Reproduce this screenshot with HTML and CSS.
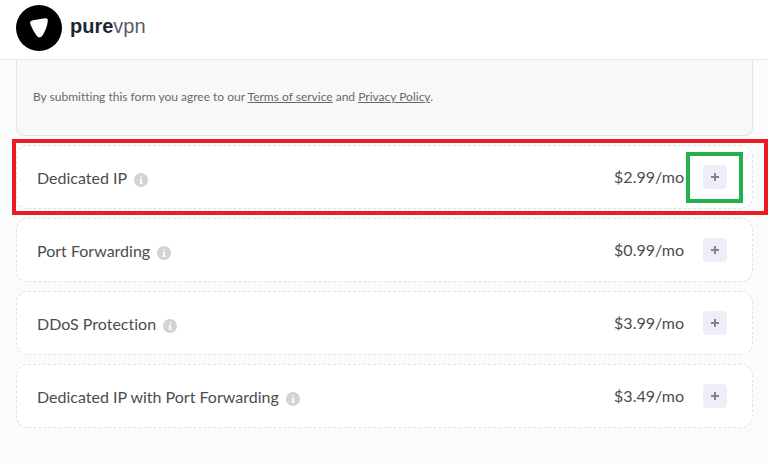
FILE: index.html
```
<!DOCTYPE html>
<html lang="en">
	<head>
		<meta charset="UTF-8">
		<meta name="viewport" content="width=device-width, initial-scale=1">
		<title>PureVPN</title>
		<link rel="stylesheet" href="styles.css">
	</head>
	<body>
		<svg class="sprite" width="0" height="0" aria-hidden="true">
			<symbol id="icon-info" viewBox="0 0 14 14">
				<circle cx="7" cy="7" r="7" fill="#d3d3d3"/>
				<path d="M6.600 3h1.700v1.600H6.600zM5.800 5.700h2.200v4h.6V11H5.600V9.700h.7V7h-.5z" fill="#fff"/>
			</symbol>
			<symbol id="icon-plus" viewBox="0 0 10 10">
				<path d="M5 1v8M1 5h8" stroke="#85828a" stroke-width="2" fill="none"/>
			</symbol>
		</svg>
		<header class="topbar">
			<a class="logo" href="#">
				<svg class="logo-mark" viewBox="0 0 46 46" aria-hidden="true">
					<circle cx="23" cy="23" r="23" fill="#000"/>
					<path d="M17 15.200L29 13.200Q32 12.800 31.800 15.800Q31.300 23 26.500 30.500Q23.500 34.500 20.500 30.500Q16.500 25 14.300 19Q13.300 15.900 17 15.200z" fill="#fff"/>
				</svg>
				<span class="logo-text"><b>pure</b>vpn</span>
			</a>
		</header>
		<main class="content">
			<section class="terms">
				<p>By submitting this form you agree to our <a href="#">Terms of service</a> and <a href="#">Privacy Policy</a>.</p>
			</section>
			<ul class="addons">
				<li class="addon addon-marked">
					<span class="addon-name">Dedicated IP</span>
					<svg class="info"><use href="#icon-info"/></svg>
					<span class="price">$2.99/mo</span>
					<button class="add" type="button" aria-label="Add Dedicated IP"><svg><use href="#icon-plus"/></svg></button>
				</li>
				<li class="addon">
					<span class="addon-name">Port Forwarding</span>
					<svg class="info"><use href="#icon-info"/></svg>
					<span class="price">$0.99/mo</span>
					<button class="add" type="button" aria-label="Add Port Forwarding"><svg><use href="#icon-plus"/></svg></button>
				</li>
				<li class="addon">
					<span class="addon-name">DDoS Protection</span>
					<svg class="info"><use href="#icon-info"/></svg>
					<span class="price">$3.99/mo</span>
					<button class="add" type="button" aria-label="Add DDoS Protection"><svg><use href="#icon-plus"/></svg></button>
				</li>
				<li class="addon">
					<span class="addon-name">Dedicated IP with Port Forwarding</span>
					<svg class="info"><use href="#icon-info"/></svg>
					<span class="price">$3.49/mo</span>
					<button class="add" type="button" aria-label="Add Dedicated IP with Port Forwarding"><svg><use href="#icon-plus"/></svg></button>
				</li>
			</ul>
		</main>
	</body>
</html>
```

FILE: styles.css
```
* {
	box-sizing: border-box;
}

body {
	margin: 0;
	background: #fafcfb;
	color: #4c4c50;
	font-family: Lato, "Open Sans", sans-serif;
	font-size: 16px;
	font-variant-ligatures: none;
	line-height: 20px;
}

.sprite {
	display: block;
}

/* header */
.topbar {
	padding: 5px 16px 8px;
	background: #fff;
	border-bottom: 1px solid #ececec;
}
.logo {
	display: flex;
	gap: 8px;
	width: max-content;
	color: #5a5c69;
	text-decoration: none;
}
.logo-mark {
	width: 46px;
	height: 46px;
}
.logo-text {
	padding-top: 9px;
	font-family: "Liberation Sans", Arial, sans-serif;
	font-size: 20px;
	line-height: 24px;
}
.logo-text b {
	color: #1d2733;
}

.content {
	padding: 0 15px 32px 16px;
}

/* agreement box, its top runs under the header */
.terms {
	padding: 28px 16px 29px;
	background: #f8f8f8;
	border: 1px solid #e2e4e3;
	border-top: 0;
	border-radius: 0 0 8px 8px;
	color: #68686c;
	font-size: 12px;
	line-height: 18px;
}
.terms p {
	margin: 0;
}
.terms a {
	color: inherit;
}

/* add-on rows */
.addons {
	display: flex;
	flex-direction: column;
	gap: 9px;
	margin: 9px 0 0;
	padding: 0;
	list-style: none;
}
.addon {
	display: flex;
	align-items: center;
	position: relative;
	height: 64px;
	padding: 0 25px 0 20px;
	background: #fff;
	border: 1px dashed #e0e3e2;
	border-radius: 12px;
}
.addon-name {
	padding-top: 2px;
}
.info {
	width: 14px;
	height: 14px;
	margin: 5px 0 0 7px;
}
.price {
	margin-left: auto;
}
.add {
	display: flex;
	align-items: center;
	justify-content: center;
	position: relative;
	width: 24px;
	height: 24px;
	margin-left: 19px;
	padding: 0;
	background: #efeef8;
	border: 0;
	border-radius: 4px;
	cursor: pointer;
}
.add svg {
	width: 10px;
	height: 10px;
}

/* marked row: red frame around it, green frame around its button */
.addon-marked::after {
	content: "";
	position: absolute;
	inset: -7px -16px -7px -5px;
	border: 4px solid #ed1c24;
	pointer-events: none;
}
.addon-marked .add::after {
	content: "";
	position: absolute;
	inset: -13px -16px -14px -17px;
	border: 4px solid #22b14c;
	pointer-events: none;
}
```
